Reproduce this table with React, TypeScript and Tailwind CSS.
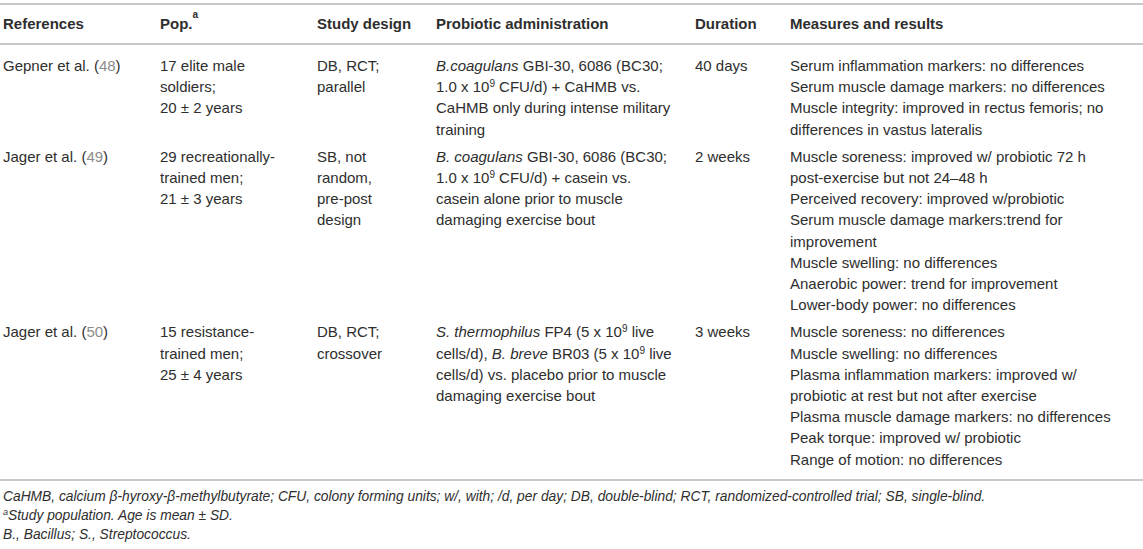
import React from 'react';

type Row = {
  author: string;
  ref: string;
  pop: React.ReactNode;
  design: React.ReactNode;
  probiotic: React.ReactNode;
  duration: string;
  results: React.ReactNode[];
};

const E = () => <sup className="relative top-[1px] align-super text-[10px] leading-none">9</sup>;

const rows: Row[] = [
  {
    author: 'Gepner et al.',
    ref: '48',
    pop: (
      <>
        17 elite male
        <br />
        soldiers;
        <br />
        20 ± 2 years
      </>
    ),
    design: (
      <>
        DB, RCT;
        <br />
        parallel
      </>
    ),
    probiotic: (
      <>
        <i>B.coagulans</i> GBI-30, 6086 (BC30;
        <br />
        1.0 x 10
        <E /> CFU/d) + CaHMB vs.
        <br />
        CaHMB only during intense military
        <br />
        training
      </>
    ),
    duration: '40 days',
    results: [
      'Serum inflammation markers: no differences',
      'Serum muscle damage markers: no differences',
      <>
        Muscle integrity: improved in rectus femoris; no
        <br />
        differences in vastus lateralis
      </>,
    ],
  },
  {
    author: 'Jager et al.',
    ref: '49',
    pop: (
      <>
        29 recreationally-
        <br />
        trained men;
        <br />
        21 ± 3 years
      </>
    ),
    design: (
      <>
        SB, not
        <br />
        random,
        <br />
        pre-post
        <br />
        design
      </>
    ),
    probiotic: (
      <>
        <i>B. coagulans</i> GBI-30, 6086 (BC30;
        <br />
        1.0 x 10
        <E /> CFU/d) + casein vs.
        <br />
        casein alone prior to muscle
        <br />
        damaging exercise bout
      </>
    ),
    duration: '2 weeks',
    results: [
      <>
        Muscle soreness: improved w/ probiotic 72 h
        <br />
        post-exercise but not 24–48 h
      </>,
      'Perceived recovery: improved w/probiotic',
      <>
        Serum muscle damage markers:trend for
        <br />
        improvement
      </>,
      'Muscle swelling: no differences',
      'Anaerobic power: trend for improvement',
      'Lower-body power: no differences',
    ],
  },
  {
    author: 'Jager et al.',
    ref: '50',
    pop: (
      <>
        15 resistance-
        <br />
        trained men;
        <br />
        25 ± 4 years
      </>
    ),
    design: (
      <>
        DB, RCT;
        <br />
        crossover
      </>
    ),
    probiotic: (
      <>
        <i>S. thermophilus</i> FP4 (5 x 10
        <E /> live
        <br />
        cells/d), <i>B. breve</i> BR03 (5 x 10
        <E /> live
        <br />
        cells/d) vs. placebo prior to muscle
        <br />
        damaging exercise bout
      </>
    ),
    duration: '3 weeks',
    results: [
      'Muscle soreness: no differences',
      'Muscle swelling: no differences',
      <>
        Plasma inflammation markers: improved w/
        <br />
        probiotic at rest but not after exercise
      </>,
      'Plasma muscle damage markers: no differences',
      'Peak torque: improved w/ probiotic',
      'Range of motion: no differences',
    ],
  },
];

const cols = 'grid grid-cols-[157px_157px_119px_259px_95px_1fr]';

export default function App() {
  return (
    <div className="min-h-[549px] w-[1143px] bg-white pt-[3px] font-['Liberation_Sans',Arial,sans-serif] text-[#2e2e2e]">
      <div className="border-y-2 border-[#c9c9c9]">
        <div className={`${cols} h-[38px] items-center pl-[3px] text-[15px] font-bold`}>
          <div>References</div>
          <div>
            Pop.<sup className="align-super text-[10px] font-bold">a</sup>
          </div>
          <div>Study design</div>
          <div>Probiotic administration</div>
          <div>Duration</div>
          <div>Measures and results</div>
        </div>
      </div>
      <div className="border-b-2 border-[#c9c9c9] pb-[6px] pt-[7px] text-[15px] leading-[21.2px]">
        {rows.map((r) => (
          <div key={r.ref} className={`${cols} py-[3px] pl-[3px]`}>
            <div>
              {r.author} (<span className="text-[#8c8c8c]">{r.ref}</span>)
            </div>
            <div>{r.pop}</div>
            <div>{r.design}</div>
            <div>{r.probiotic}</div>
            <div>{r.duration}</div>
            <div>
              {r.results.map((m, i) => (
                <div key={i}>{m}</div>
              ))}
            </div>
          </div>
        ))}
      </div>
      <div className="pl-[3px] pt-[6px] text-[13.8px] italic leading-[19px]">
        <div>
          CaHMB, calcium β-hyroxy-β-methylbutyrate; CFU, colony forming units; w/, with; /d, per day; DB, double-blind; RCT,
          randomized-controlled trial; SB, single-blind.
        </div>
        <div>
          <sup className="text-[9px]">a</sup>Study population. Age is mean ± SD.
        </div>
        <div>B., Bacillus; S., Streptococcus.</div>
      </div>
    </div>
  );
}
